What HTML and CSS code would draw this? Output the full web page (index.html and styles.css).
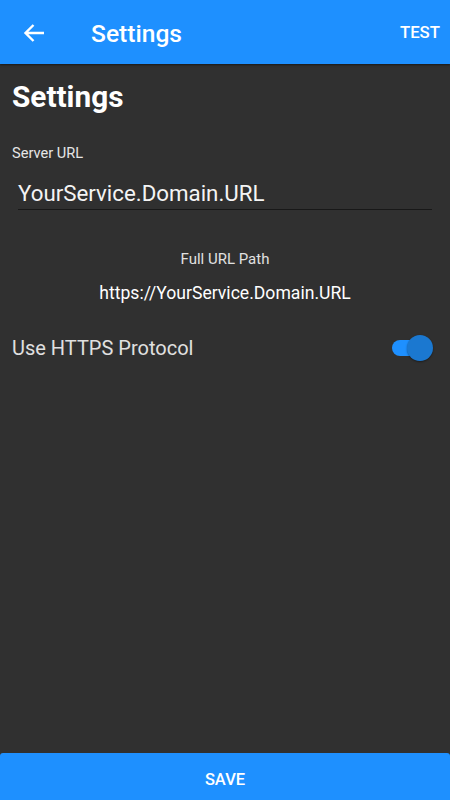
FILE: index.html
```html
<!DOCTYPE html>
<html>
<head>
<meta charset="utf-8">
<link rel="stylesheet" href="styles.css">
</head>
<body>
<div class="app">
  <header class="toolbar">
    <svg class="back" width="22" height="20" viewBox="0 0 22 20"><path d="M21 10H3M10.5 2L2.5 10l8 8" fill="none" stroke="#fff" stroke-width="2.4"/></svg>
    <div class="tb-title">Settings</div>
    <div class="tb-action">TEST</div>
  </header>
  <main class="content">
    <h1 class="page-title">Settings</h1>
    <div class="label">Server URL</div>
    <div class="entry">YourService.Domain.URL</div>
    <div class="full-label">Full URL Path</div>
    <div class="full-url">https://YourService.Domain.URL</div>
    <div class="row">
      <span class="row-text">Use HTTPS Protocol</span>
      <span class="switch"><span class="track"></span><span class="thumb"></span></span>
    </div>
  </main>
  <footer class="save">SAVE</footer>
</div>
</body>
</html>
```
FILE: styles.css
```css
* { box-sizing: border-box; }
html, body { margin: 0; padding: 0; }
body {
  width: 450px;
  height: 800px;
  background: #303030;
  font-family: Roboto, "Liberation Sans", sans-serif;
  color: #fff;
  overflow: hidden;
}
.app {
  display: flex;
  flex-direction: column;
  height: 800px;
}
.toolbar {
  height: 64px;
  background: #1e90ff;
  display: flex;
  align-items: center;
  padding: 0 10px 0 23px;
  box-shadow: 0 1px 2px rgba(0,0,0,0.5);
  position: relative;
  z-index: 1;
  flex: none;
}
.back { flex: none; margin-top: 1px; }
.tb-title {
  margin-left: 46px;
  font-size: 24.6px;
  font-weight: 500;
  flex: 1;
  padding-top: 2px;
}
.tb-action {
  font-size: 16.8px;
  font-weight: 500;
}
.content {
  flex: 1;
  padding: 0 18px 0 12px;
}
.page-title {
  margin: 16px 0 0;
  font-size: 29.8px;
  font-weight: 700;
  line-height: 34px;
}
.label {
  margin-top: 31px;
  font-size: 14.6px;
  color: #e6e6e6;
  line-height: 17px;
}
.entry {
  margin: 16px 0 0 6px;
  font-size: 22.3px;
  line-height: 30px;
  color: #f4f4f4;
  padding-bottom: 1px;
  border-bottom: 1px solid #181818;
}
.full-label {
  margin-top: 40px;
  text-align: center;
  font-size: 15px;
  color: #e0e0e0;
  line-height: 18px;
  padding-left: 6px;
}
.full-url {
  margin-top: 14px;
  text-align: center;
  font-size: 17.6px;
  line-height: 22px;
  padding-left: 6px;
}
.row {
  margin-top: 31px;
  display: flex;
  align-items: center;
  justify-content: space-between;
  height: 26px;
}
.row-text {
  font-size: 20px;
  color: #e0e0e0;
}
.switch {
  position: relative;
  width: 42px;
  height: 26px;
  display: block;
}
.track {
  position: absolute;
  left: 2px;
  top: 5px;
  width: 34px;
  height: 16px;
  border-radius: 8px;
  background: #1e90ff;
}
.thumb {
  position: absolute;
  right: -1px;
  top: 0;
  width: 26px;
  height: 26px;
  border-radius: 50%;
  background: #1b78d0;
  box-shadow: 0 1px 2px rgba(0,0,0,0.4);
}
.save {
  height: 47px;
  flex: none;
  background: #1e90ff;
  border-radius: 3px 3px 0 0;
  display: flex;
  align-items: center;
  justify-content: center;
  padding-top: 6px;
  font-size: 16.5px;
  font-weight: 500;
}
```
